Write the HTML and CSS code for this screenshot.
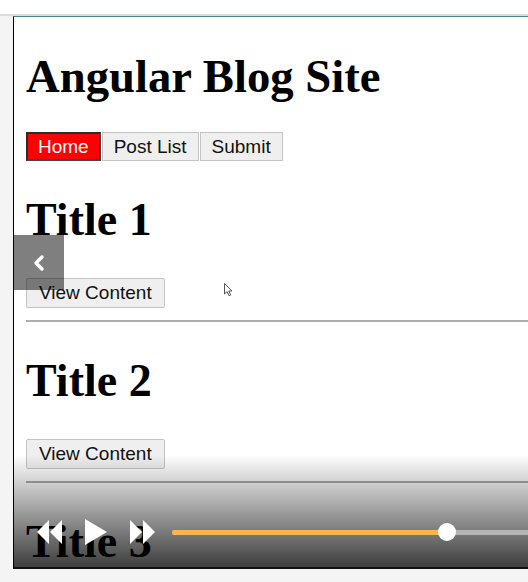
FILE: index.html
```html
<!DOCTYPE html>
<html lang="en">
<head>
  <meta charset="UTF-8" />
  <title>Angular Blog Site</title>
  <link rel="stylesheet" href="styles.css">
</head>
<body>
  <div class="topbar"></div>

  <div class="player">
    <div class="page">
      <h1>Angular Blog Site</h1>
      <nav class="nav">
        <button class="active">Home</button>
        <button>Post List</button>
        <button>Submit</button>
      </nav>

      <div class="post">
        <h2>Title 1</h2>
        <button class="btn">View Content</button>
        <hr>
      </div>
      <div class="post">
        <h2>Title 2</h2>
        <button class="btn">View Content</button>
        <hr>
      </div>
      <div class="post">
        <h2>Title 3</h2>
      </div>
    </div>

    <!-- overlays from the video player -->
    <div class="prev">
      <svg width="14" height="18" viewBox="0 0 14 18"><polyline points="10,3 4,9 10,15" fill="none" stroke="#fff" stroke-width="3.5" stroke-linecap="round" stroke-linejoin="round"/></svg>
    </div>

    <svg class="cursor" width="10" height="14" viewBox="0 0 10 14"><path d="M0.5 0.5 L0.5 11 L3 8.6 L5 12.8 L6.7 12 L4.8 8 L8 8 Z" fill="#fff" stroke="#555" stroke-width="1"/></svg>

    <div class="controls">
      <svg class="icon" width="25" height="24" viewBox="0 0 25 24"><polygon points="12,0 0,12 12,24" fill="#fff"/><polygon points="25,0 13,12 25,24" fill="#fff"/></svg>
      <svg class="icon" width="22" height="26" viewBox="0 0 22 26"><polygon points="0,0 22,13 0,26" fill="#fff"/></svg>
      <svg class="icon" width="25" height="24" viewBox="0 0 25 24"><polygon points="0,0 12,12 0,24" fill="#fff"/><polygon points="13,0 25,12 13,24" fill="#fff"/></svg>
      <div class="slider">
        <div class="track"><div class="fill" style="width: 275px"></div></div>
        <div class="thumb" style="left: 266px"></div>
      </div>
    </div>
  </div>
</body>
</html>
```

FILE: styles.css
```css
body {
  margin: 0;
  width: 528px;
  height: 582px;
  overflow: hidden;
  background-color: #f4f4f4;
}
.topbar {
  height: 14px;
  background-color: #fff;
  border-bottom: 2px solid #dcdcdc;
}
.player {
  position: relative;
  margin-left: 13px;
  height: 550px;
  overflow: hidden;
  background-color: #fff;
  border-left: 1px solid #000;
  border-top: 1px solid #4d8a8b;
  border-bottom: 2px solid #111;
}
.page {
  width: 800px;
  padding-left: 12px;
  font-family: 'Liberation Serif', 'Times New Roman', serif;
}
h1, h2 {
  font-size: 46px;
  line-height: 53px;
  font-weight: 700;
  color: #000;
}
h1 {
  margin: 33px 0 0;
  font-size: 46.7px;
}
h2 {
  margin: 32px 0;
}
button {
  font-family: 'Liberation Sans', Arial, sans-serif;
  font-size: 19px;
  color: #111;
  background-color: #efefef;
  border: 1px solid #c4c4c4;
  border-radius: 2px;
  cursor: pointer;
}
.nav {
  display: flex;
  gap: 1px;
  margin-top: 29px;
}
.nav button {
  height: 29px;
  padding: 0 11px;
  border-radius: 0;
}
.nav .active {
  background-color: #ff0000;
  color: #fff;
  border: 2px solid #2b2b2b;
  border-right-color: #444;
  border-bottom-color: #444;
  padding: 0 10px;
}
.btn {
  display: block;
  height: 30px;
  padding: 0 12px;
}
hr {
  margin: 12px 0 0;
  height: 0;
  border: 0;
  border-top: 2px solid #adadad;
}
/* player overlays */
.prev {
  position: absolute;
  left: 0;
  top: 218px;
  width: 50px;
  height: 55px;
  background-color: rgba(0, 0, 0, 0.5);
  display: flex;
  align-items: center;
  justify-content: center;
}
.cursor {
  position: absolute;
  left: 210px;
  top: 266px;
}
.controls {
  position: absolute;
  left: 0;
  right: 0;
  bottom: 0;
  height: 112px;
  box-sizing: border-box;
  padding: 0 0 22px 23px;
  display: flex;
  align-items: flex-end;
  background: linear-gradient(to bottom, rgba(0, 0, 0, 0), rgba(0, 0, 0, 0.76));
}
.controls .icon {
  display: block;
  margin-right: 23px;
  margin-bottom: 1px;
}
.controls .icon:nth-child(2) {
  margin-bottom: 0;
}
.slider {
  position: relative;
  flex: 1;
  height: 26px;
  margin-left: -6px;
  display: flex;
  align-items: center;
}
.track {
  flex: 1;
  height: 5px;
  background-color: #b5b5b5;
  border-radius: 3px 0 0 3px;
}
.fill {
  height: 5px;
  background-color: #fdb44b;
  border-radius: 3px 0 0 3px;
}
.thumb {
  position: absolute;
  top: 4px;
  width: 18px;
  height: 18px;
  border-radius: 50%;
  background-color: #fff;
}
```
